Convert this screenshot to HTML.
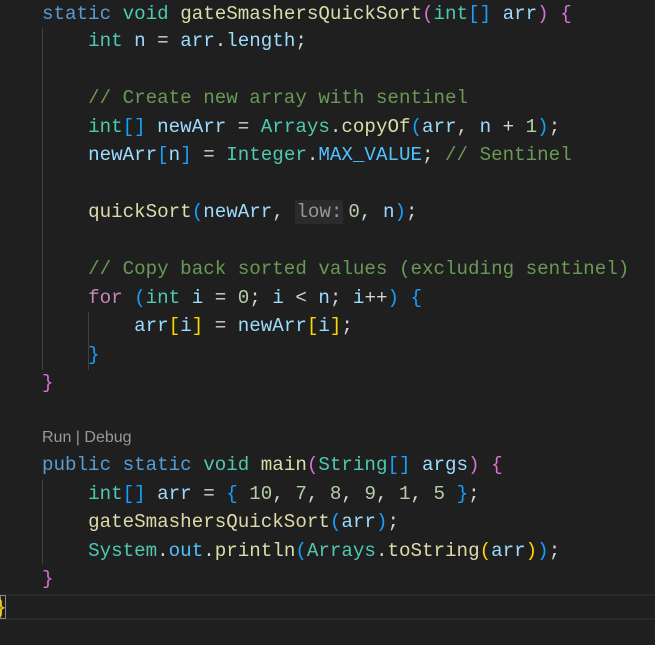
<!DOCTYPE html>
<html><head><meta charset="utf-8"><style>
html,body{margin:0;padding:0;background:#1f1f1f;width:655px;height:645px;overflow:hidden}
.l{position:absolute;left:42px;height:28px;line-height:28px;font-family:"Liberation Mono",monospace;font-size:19.2px;white-space:pre;color:#d4d4d4}
.k{color:#569cd6}.t{color:#4ec9b0}.f{color:#dcdcaa}.v{color:#9cdcfe}.c{color:#6a9955}.n{color:#b5cea8}
.p{color:#da70d6}.b{color:#179fff}.g{color:#ffd700}.cn{color:#4fc1ff}.kw{color:#c586c0}
.h{display:inline-block;background:#2b2b2b;color:#969696;font-family:"Liberation Mono",monospace;font-size:19.2px;line-height:24px;padding:0 1px;margin-right:5px}
.guide{position:absolute;width:1px;background:#404040}
.lens{position:absolute;left:42px;top:428px;font-family:"Liberation Sans",sans-serif;font-size:16px;color:#999;line-height:20px}
</style></head><body>
<div class="guide" style="left:42px;top:28px;height:342px"></div>
<div class="guide" style="left:42px;top:480px;height:84px"></div>
<div class="guide" style="left:88px;top:312px;height:58px"></div>
<div style="position:absolute;left:0;top:594px;width:655px;height:26px;border-top:2px solid #282828;border-bottom:2px solid #282828;box-sizing:border-box"></div>
<div style="position:absolute;left:0;top:595px;width:6px;height:24px;border:1px solid #888;box-sizing:border-box"></div>

<div class="l" style="top:0px"><span class="k">static</span> <span class="t">void</span> <span class="f">gateSmashersQuickSort</span><span class="p">(</span><span class="t">int</span><span class="b">[]</span> <span class="v">arr</span><span class="p">)</span> <span class="p">{</span></div>
<div class="l" style="top:27px">    <span class="t">int</span> <span class="v">n</span> = <span class="v">arr</span>.<span class="v">length</span>;</div>
<div class="l" style="top:84px">    <span class="c">// Create new array with sentinel</span></div>
<div class="l" style="top:113px">    <span class="t">int</span><span class="b">[]</span> <span class="v">newArr</span> = <span class="t">Arrays</span>.<span class="f">copyOf</span><span class="b">(</span><span class="v">arr</span>, <span class="v">n</span> + <span class="n">1</span><span class="b">)</span>;</div>
<div class="l" style="top:141px">    <span class="v">newArr</span><span class="b">[</span><span class="v">n</span><span class="b">]</span> = <span class="t">Integer</span>.<span class="cn">MAX_VALUE</span>; <span class="c">// Sentinel</span></div>
<div class="l" style="top:198px">    <span class="f">quickSort</span><span class="b">(</span><span class="v">newArr</span>, <span class="h">low:</span><span class="n">0</span>, <span class="v">n</span><span class="b">)</span>;</div>
<div class="l" style="top:255px">    <span class="c">// Copy back sorted values (excluding sentinel)</span></div>
<div class="l" style="top:284px">    <span class="kw">for</span> <span class="b">(</span><span class="t">int</span> <span class="v">i</span> = <span class="n">0</span>; <span class="v">i</span> &lt; <span class="v">n</span>; <span class="v">i</span>++<span class="b">)</span> <span class="b">{</span></div>
<div class="l" style="top:312px">        <span class="v">arr</span><span class="g">[</span><span class="v">i</span><span class="g">]</span> = <span class="v">newArr</span><span class="g">[</span><span class="v">i</span><span class="g">]</span>;</div>
<div class="l" style="top:341px">    <span class="b">}</span></div>
<div class="l" style="top:369px"><span class="p">}</span></div>
<div class="lens">Run | Debug</div>
<div class="l" style="top:451px"><span class="k">public</span> <span class="k">static</span> <span class="t">void</span> <span class="f">main</span><span class="p">(</span><span class="t">String</span><span class="b">[]</span> <span class="v">args</span><span class="p">)</span> <span class="p">{</span></div>
<div class="l" style="top:480px">    <span class="t">int</span><span class="b">[]</span> <span class="v">arr</span> = <span class="b">{</span> <span class="n">10</span>, <span class="n">7</span>, <span class="n">8</span>, <span class="n">9</span>, <span class="n">1</span>, <span class="n">5</span> <span class="b">}</span>;</div>
<div class="l" style="top:508px">    <span class="f">gateSmashersQuickSort</span><span class="b">(</span><span class="v">arr</span><span class="b">)</span>;</div>
<div class="l" style="top:537px">    <span class="t">System</span>.<span class="cn">out</span>.<span class="f">println</span><span class="b">(</span><span class="t">Arrays</span>.<span class="f">toString</span><span class="g">(</span><span class="v">arr</span><span class="g">)</span><span class="b">)</span>;</div>
<div class="l" style="top:565px"><span class="p">}</span></div>
<div class="l" style="top:594px;left:-5px"><span class="g">}</span></div>
</body></html>
